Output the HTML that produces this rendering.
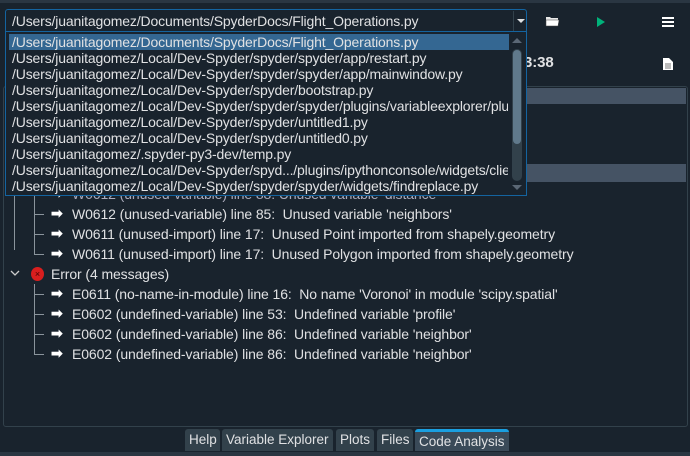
<!DOCTYPE html>
<html><head><style>
*{margin:0;padding:0;box-sizing:border-box}
body{width:690px;height:456px;background:#19232d;font-family:"Liberation Sans",sans-serif;font-size:14px;color:#e0e1e3;position:relative;overflow:hidden;letter-spacing:-0.1px}
.abs{position:absolute}
.pane{left:3px;top:86px;width:685px;height:341px;border:1px solid #32414b;border-radius:3px;background:#19232d}
.row{position:absolute;left:0;height:20px;line-height:20px;white-space:nowrap}
.vl{position:absolute;width:1px;background:#8a949c}
.hl{position:absolute;height:1px;background:#8a949c;width:10px}
.arr{position:absolute;color:#fff;font-size:14px;font-weight:bold}
.tab{position:absolute;top:429px;height:22px;line-height:22px;background:#32414b;padding:0 4px;color:#e0e1e3;border-radius:3px 3px 0 0;letter-spacing:0;font-size:13.5px;white-space:nowrap}
.dd{left:5px;top:31px;width:522px;height:165px;background:#19232d;border:1px solid #1464a0}
.di{position:absolute;left:6px;height:16px;line-height:16px;white-space:nowrap;width:496px;overflow:hidden;letter-spacing:-0.15px}
</style></head><body>
<div class="abs" style="left:0;top:0;width:690px;height:3px;background:#2a3642"></div>
<div class="abs" style="left:5px;top:9px;width:522px;height:24px;border:1px solid #1464a0;border-radius:3px;background:#19232d"></div>
<div class="abs" style="left:12px;top:13px;white-space:nowrap;letter-spacing:-0.15px">/Users/juanitagomez/Documents/SpyderDocs/Flight_Operations.py</div>
<div class="abs" style="left:513px;top:11px;width:1px;height:20px;background:#32414b"></div>
<div class="abs" style="left:517px;top:19px;border-left:4px solid transparent;border-right:4px solid transparent;border-top:4px solid #e0e1e3"></div>
<svg class="abs" style="left:545px;top:15px" width="15" height="12"><path d="M1 2h4l1 1h7v8H1z" fill="#e8e8e8"/><path d="M1 5h13l-1 6H1z" fill="#fff" stroke="#444" stroke-width=".5"/></svg>
<div class="abs" style="left:597px;top:17px;border-top:5px solid transparent;border-bottom:5px solid transparent;border-left:8px solid #00b27a"></div>
<div class="abs" style="left:662px;top:17px;width:12px;height:2px;background:#fff;box-shadow:0 4px #fff,0 8px #fff"></div>
<div class="abs" style="left:524px;top:54px;font-weight:bold;font-size:15px">3:38</div>
<svg class="abs" style="left:662px;top:57px" width="12" height="14"><path d="M1 1h6l4 4v8H1z" fill="#fff"/><path d="M3 7h6M3 9h6M3 11h6" stroke="#777" stroke-width="1"/></svg>
<div class="abs pane"></div>
<div class="abs" style="left:5px;top:88px;width:681px;height:16px;background:#455364"></div>
<div class="abs" style="left:5px;top:164px;width:681px;height:18px;background:#455364"></div>
<div class="vl" style="left:14px;top:182px;height:68px"></div>
<div class="vl" style="left:34px;top:182px;height:72px"></div>
<div class="hl" style="left:34px;top:214px"></div><div class="hl" style="left:34px;top:234px"></div><div class="hl" style="left:34px;top:254px"></div>
<div class="row" style="left:72px;top:184px;color:#aab">W0612 (unused-variable) line 88:  Unused variable 'distance'</div>
<div class="arr" style="left:51px;top:185px">➡</div>
<div class="arr" style="left:51px;top:205px">➡</div><div class="row" style="left:72px;top:204px">W0612 (unused-variable) line 85:&nbsp; Unused variable 'neighbors'</div>
<div class="arr" style="left:51px;top:225px">➡</div><div class="row" style="left:72px;top:224px">W0611 (unused-import) line 17:&nbsp; Unused Point imported from shapely.geometry</div>
<div class="arr" style="left:51px;top:245px">➡</div><div class="row" style="left:72px;top:244px">W0611 (unused-import) line 17:&nbsp; Unused Polygon imported from shapely.geometry</div>
<svg class="abs" style="left:10px;top:270px" width="10" height="8"><path d="M1 1l4 4 4-4" fill="none" stroke="#ccc" stroke-width="1.3"/></svg>
<div class="abs" style="left:31px;top:267px;width:13px;height:14px;border-radius:50%;background:#d81e1e;color:#400;font-size:9px;line-height:14px;text-align:center">×</div>
<div class="row" style="left:51px;top:264px">Error (4 messages)</div>
<div class="vl" style="left:34px;top:284px;height:71px"></div>
<div class="hl" style="left:34px;top:294px"></div><div class="hl" style="left:34px;top:314px"></div><div class="hl" style="left:34px;top:334px"></div><div class="hl" style="left:34px;top:354px"></div>
<div class="arr" style="left:51px;top:285px">➡</div><div class="row" style="left:72px;top:284px">E0611 (no-name-in-module) line 16:&nbsp; No name 'Voronoi' in module 'scipy.spatial'</div>
<div class="arr" style="left:51px;top:305px">➡</div><div class="row" style="left:72px;top:304px">E0602 (undefined-variable) line 53:&nbsp; Undefined variable 'profile'</div>
<div class="arr" style="left:51px;top:325px">➡</div><div class="row" style="left:72px;top:324px">E0602 (undefined-variable) line 86:&nbsp; Undefined variable 'neighbor'</div>
<div class="arr" style="left:51px;top:345px">➡</div><div class="row" style="left:72px;top:344px">E0602 (undefined-variable) line 86:&nbsp; Undefined variable 'neighbor'</div>
<div class="tab" style="left:185px;width:35px">Help</div>
<div class="tab" style="left:222px;width:111px">Variable Explorer</div>
<div class="tab" style="left:336px;width:38px">Plots</div>
<div class="tab" style="left:377px;width:36px">Files</div>
<div class="tab" style="left:415px;width:94px;border-top:3px solid #1a9fe0;line-height:19px;background:#3a4a58">Code Analysis</div>
<div class="abs" style="left:0;top:452px;width:690px;height:4px;background:#2a3642"></div>
<div class="abs dd">
<div class="abs" style="left:3px;top:2px;width:500px;height:16px;background:#346792"></div>
<div class="di" style="top:2px">/Users/juanitagomez/Documents/SpyderDocs/Flight_Operations.py</div>
<div class="di" style="top:18px">/Users/juanitagomez/Local/Dev-Spyder/spyder/spyder/app/restart.py</div>
<div class="di" style="top:34px">/Users/juanitagomez/Local/Dev-Spyder/spyder/spyder/app/mainwindow.py</div>
<div class="di" style="top:50px">/Users/juanitagomez/Local/Dev-Spyder/spyder/bootstrap.py</div>
<div class="di" style="top:66px">/Users/juanitagomez/Local/Dev-Spyder/spyder/spyder/plugins/variableexplorer/plugin.py</div>
<div class="di" style="top:82px">/Users/juanitagomez/Local/Dev-Spyder/spyder/untitled1.py</div>
<div class="di" style="top:98px">/Users/juanitagomez/Local/Dev-Spyder/spyder/untitled0.py</div>
<div class="di" style="top:114px">/Users/juanitagomez/.spyder-py3-dev/temp.py</div>
<div class="di" style="top:130px">/Users/juanitagomez/Local/Dev-Spyder/spyd.../plugins/ipythonconsole/widgets/client.py</div>
<div class="di" style="top:146px">/Users/juanitagomez/Local/Dev-Spyder/spyder/spyder/widgets/findreplace.py</div>
<div class="abs" style="left:506px;top:6px;border-left:5px solid transparent;border-right:5px solid transparent;border-bottom:5px solid #5a6775"></div>
<div class="abs" style="left:506px;top:17px;width:10px;height:132px;border-radius:5px;background:#32414b"></div>
<div class="abs" style="left:507px;top:18px;width:8px;height:94px;border-radius:4px;background:#60798b"></div>
<div class="abs" style="left:506px;top:153px;border-left:5px solid transparent;border-right:5px solid transparent;border-top:5px solid #5a6775"></div>
</div>
</body></html>
